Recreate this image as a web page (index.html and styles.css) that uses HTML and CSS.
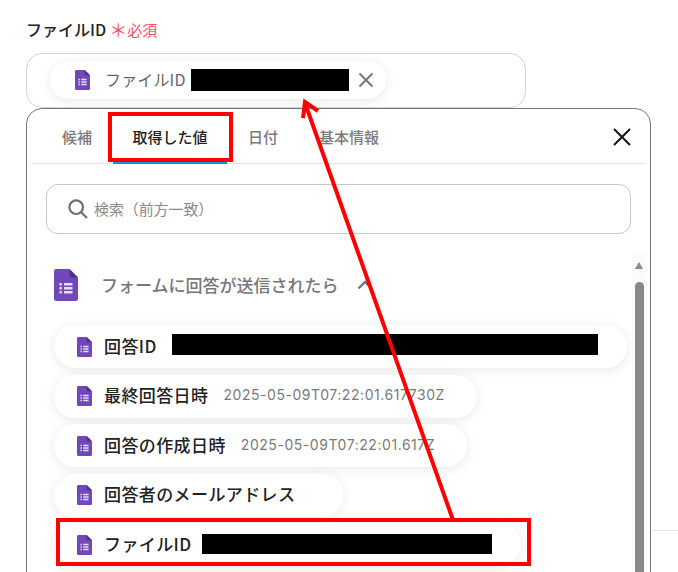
FILE: index.html
```html
<!DOCTYPE html>
<html lang="ja">
<head>
<meta charset="utf-8">
<title>ファイルID</title>
<link rel="stylesheet" href="styles.css">
</head>
<body>
<svg width="0" height="0" class="defs">
  <symbol id="forms" viewBox="0 0 24 32">
    <path d="M2.2 0H15.5L24 8.5V29.8A2.2 2.2 0 0 1 21.800 32H2.200A2.200 2.200 0 0 1 0 29.800V2.200A2.200 2.200 0 0 1 2.200 0Z" fill="#7248b9"/>
    <path d="M15.500 0L24 8.500H17.500A2 2 0 0 1 15.500 6.500Z" fill="#4f2f8f"/>
    <path d="M5.500 14h2.400v2.400H5.500zM5.500 18h2.400v2.400H5.500zM5.500 22h2.400v2.400H5.500zM10 14h8.500v2.400H10zM10 18h8.500v2.400H10zM10 22h8.500v2.400H10z" fill="#e6def5"/>
  </symbol>
</svg>
<main class="page">
  <div class="label">
    <span>ファイルID</span>
    <span class="req"><span class="star">＊</span>必須</span>
  </div>
  <div class="input">
    <div class="chip selected">
      <svg class="ic"><use href="#forms"/></svg>
      <span class="sel-text">ファイルID</span>
      <span class="mask m-sel"></span>
      <svg class="remove" viewBox="0 0 16 16"><path d="M1.500 1.500L14.500 14.500M14.500 1.500L1.500 14.500"/></svg>
    </div>
  </div>
  <section class="panel">
    <nav class="tabs">
      <span class="tab t1">候補</span>
      <span class="tab active">取得した値</span>
      <span class="tab t3">日付</span>
      <span class="tab t4">基本情報</span>
      <svg class="close" viewBox="0 0 18 18"><path d="M1 1L17 17M17 1L1 17"/></svg>
    </nav>
    <div class="search">
      <svg class="glass" viewBox="0 0 20 20"><circle cx="8.200" cy="8.200" r="6.800"/><path d="M13 13L19 19"/></svg>
      <span class="hint">検索（前方一致）</span>
    </div>
    <div class="body">
      <div class="list">
        <div class="group">
          <svg class="ic-big"><use href="#forms"/></svg>
          <span class="group-name">フォームに回答が送信されたら</span>
          <svg class="chev" viewBox="0 0 16 10"><path d="M1.500 8.500L8 2L14.500 8.500"/></svg>
        </div>
        <div class="chip row r1"><svg class="ic"><use href="#forms"/></svg><b>回答ID</b><span class="mask m1"></span></div>
        <div class="chip row"><svg class="ic"><use href="#forms"/></svg><b>最終回答日時</b><span class="val">2025-05-09T07:22:01.617730Z</span></div>
        <div class="chip row"><svg class="ic"><use href="#forms"/></svg><b>回答の作成日時</b><span class="val">2025-05-09T07:22:01.617Z</span></div>
        <div class="chip row r4"><svg class="ic"><use href="#forms"/></svg><b>回答者のメールアドレス</b></div>
        <div class="chip row r5"><svg class="ic"><use href="#forms"/></svg><b>ファイルID</b><span class="mask m5"></span></div>
      </div>
      <div class="scroll"><i class="arrow"></i><i class="thumb"></i></div>
    </div>
  </section>
  <div class="rule"></div>
  <div class="mark box1"></div>
  <div class="mark box2"></div>
  <svg class="pointer" viewBox="0 0 678 572"><path d="M453 520L305 103M303 118L305 102L318 111"/></svg>
</main>
</body>
</html>
```
FILE: styles.css
```css
* { box-sizing: border-box; }
html, body { margin: 0; height: 100%; overflow: hidden; background: #fff; }
body { font-family: "Noto Sans CJK JP", "Noto Sans", sans-serif; color: #222; }
.defs { position: absolute; }
.page { position: relative; width: 678px; height: 572px; overflow: hidden; padding: 17px 0 0 26px; }

.label { display: flex; align-items: center; gap: 3px; height: 24px; font-size: 16px; font-weight: 500; color: #222; margin-bottom: 12px; }
.req { display: flex; align-items: center; font-size: 15px; font-weight: 400; color: #ff4d6a; }
.star { font-size: 18px; margin-right: 0; }

.input { width: 500px; height: 55px; border: 1px solid #d3d3da; border-radius: 16px; padding: 7px 23px; }
.chip { display: flex; align-items: center; background: #fff; border-radius: 21px; box-shadow: 0 2px 12px rgba(0,0,0,.09); }
.selected { width: 336px; height: 38px; padding-left: 25px; border-radius: 19px; }
.ic { width: 15px; height: 20px; flex: none; }
.sel-text { margin-left: 15px; padding-bottom: 2px; font-size: 16px; letter-spacing: .15px; color: #666; white-space: nowrap; }
.mask { display: block; background: #000; flex: none; }
.m-sel { width: 158px; height: 22px; margin-left: 5px; }
.remove { width: 16px; height: 16px; margin-left: 9px; fill: none; stroke: #777; stroke-width: 2; }

.panel { width: 625px; height: 560px; margin-top: 0; border: 1px solid #777; border-radius: 16px; background: #fff; padding: 0 4px; position: relative; }
.tabs { display: flex; align-items: center; height: 55px; border-bottom: 1px solid #e3e3e3; font-size: 15px; font-weight: 500; color: #7a7a7a; position: relative; padding-top: 1px; }
.tab { white-space: nowrap; }
.t1 { margin-left: 31px; }
.active { width: 114px; margin-left: 21px; text-align: center; color: #222; align-self: stretch; display: flex; align-items: center; justify-content: center; border-bottom: 2px solid #1e88e5; margin-bottom: -1px; }
.t3 { margin-left: 21px; }
.t4 { margin-left: 41px; }
.close { width: 18px; height: 18px; margin-left: auto; margin-right: 15px; fill: none; stroke: #111; stroke-width: 2; }

.search { display: flex; align-items: center; width: 585px; height: 50px; margin: 20px 0 0 15px; border: 1px solid #c8c8c8; border-radius: 12px; padding-left: 21px; font-size: 15px; color: #8a8a8a; }
.hint { padding-bottom: 2px; margin-left: -1px; letter-spacing: -.1px; }
.glass { width: 20px; height: 20px; margin-right: 7px; fill: none; stroke: #707070; stroke-width: 2.200; }

.body { display: flex; margin-top: 19px; }
.list { display: flex; flex-direction: column; align-items: flex-start; width: 596px; padding: 7px 0 0 23px; }
.group { display: flex; align-items: center; height: 40px; margin-bottom: 25px; padding-top: 9px; }
.ic-big { width: 24px; height: 32px; flex: none; }
.group-name { margin-left: 23px; font-size: 17px; font-weight: 500; color: #777; white-space: nowrap; }
.chev { width: 16px; height: 10px; margin-left: 18px; fill: none; stroke: #777; stroke-width: 2.400; }

.row { height: 43px; padding: 0 32px 0 23px; margin-bottom: 6.500px; }
.row b { margin-left: 12px; padding-bottom: 3px; font-size: 17px; font-weight: 500; letter-spacing: .4px; color: #222; white-space: nowrap; }
.r1 { width: 573px; }
.r4 { width: 289px; }
.r5 { width: 467px; }
.val { margin-left: 15px; padding-bottom: 3px; font-family: "Inter", sans-serif; font-size: 14px; letter-spacing: .55px; color: #7a7a7a; white-space: nowrap; }
.m1 { width: 426px; height: 21px; margin-left: 15px; margin-bottom: 5px; }
.m5 { width: 290px; height: 20px; margin-left: 10px; margin-bottom: 2px; }

.scroll { width: 15px; margin-left: 5px; padding: 9px 3px 0; background: #fbfbfb; position: relative; }
.arrow { display: block; width: 0; height: 0; margin-bottom: 13px; border: 4.500px solid transparent; border-top: 0; border-bottom: 7px solid #888; }
.thumb { display: block; width: 9px; height: 300px; border-radius: 5px 5px 0 0; background: #888; }

.rule { position: absolute; left: 652px; top: 530px; width: 26px; height: 1px; background: #e5e5e5; }
.mark { position: absolute; border: 4px solid #f00; }
.box1 { left: 108px; top: 112px; width: 125px; height: 50px; }
.box2 { left: 56px; top: 518px; width: 475px; height: 48px; }
.pointer { position: absolute; left: 0; top: 0; width: 678px; height: 572px; fill: none; stroke: #f00; stroke-width: 4; }
```
